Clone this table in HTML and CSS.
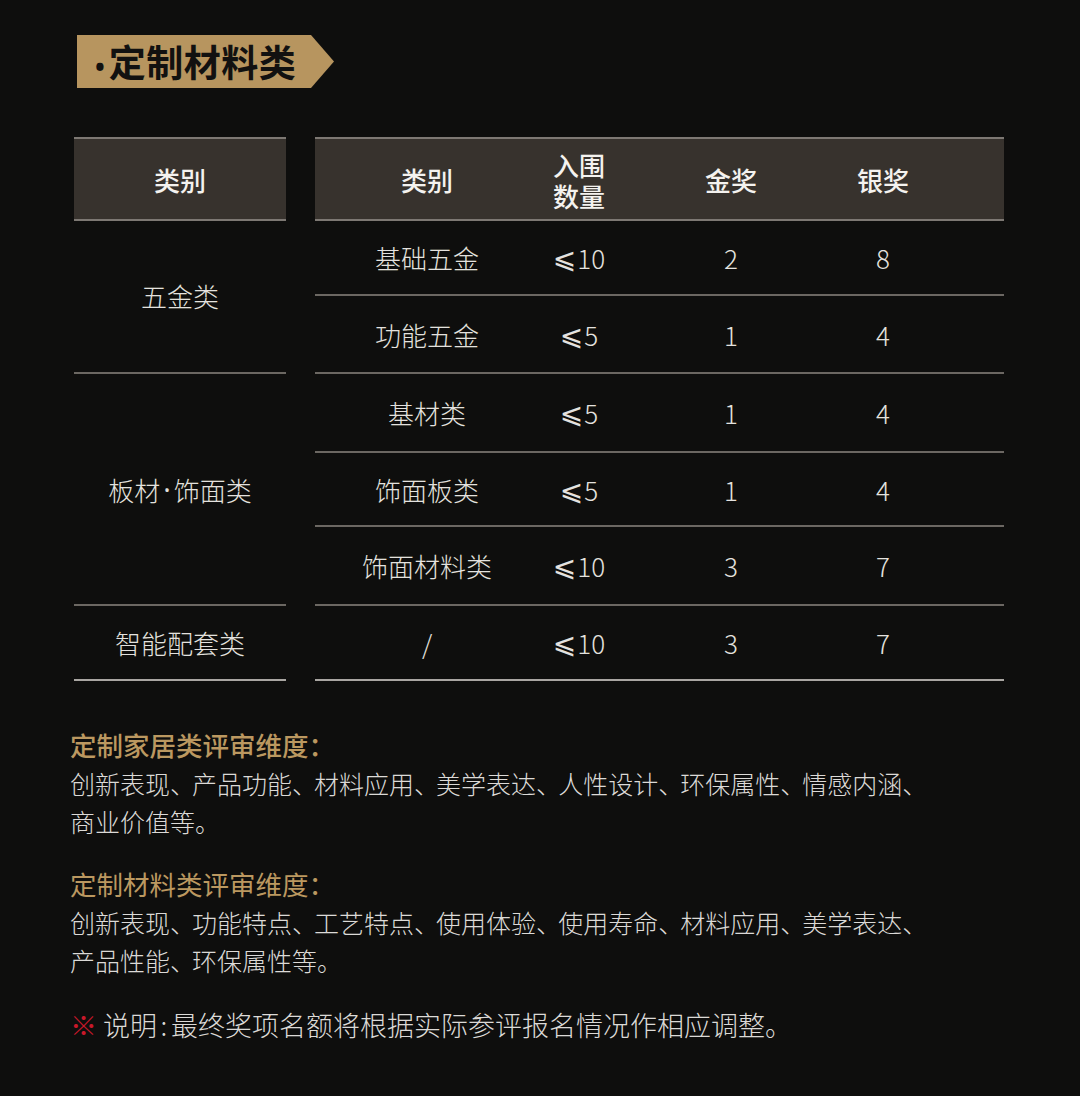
FILE: index.html
```html
<!DOCTYPE html>
<html lang="zh-CN">
<head>
<meta charset="utf-8">
<title>定制材料类</title>
<link rel="stylesheet" href="styles.css">
</head>
<body>
<div class="page">
  <div class="banner"><span class="dot">•</span>定制材料类</div>

  <div class="tables">
    <div class="tcol left">
      <div class="cell head">类别</div>
      <div class="cell h153">五金类</div>
      <div class="cell h232">板材<span class="mid">•</span>饰面类</div>
      <div class="cell h75">智能配套类</div>
    </div>
    <div class="tcol right">
      <div class="row head">
        <div class="c">类别</div>
        <div class="c two"><span class="ln">入围</span><span class="ln">数量</span></div>
        <div class="c">金奖</div>
        <div class="c">银奖</div>
      </div>
      <div class="row r75">
        <div class="c">基础五金</div><div class="c num"><span class="le">⩽</span>10</div><div class="c num">2</div><div class="c num">8</div>
      </div>
      <div class="row r78">
        <div class="c">功能五金</div><div class="c num"><span class="le">⩽</span>5</div><div class="c num">1</div><div class="c num">4</div>
      </div>
      <div class="row r79">
        <div class="c">基材类</div><div class="c num"><span class="le">⩽</span>5</div><div class="c num">1</div><div class="c num">4</div>
      </div>
      <div class="row r74">
        <div class="c">饰面板类</div><div class="c num"><span class="le">⩽</span>5</div><div class="c num">1</div><div class="c num">4</div>
      </div>
      <div class="row r79">
        <div class="c">饰面材料类</div><div class="c num"><span class="le">⩽</span>10</div><div class="c num">3</div><div class="c num">7</div>
      </div>
      <div class="row r75 last">
        <div class="c">/</div><div class="c num"><span class="le">⩽</span>10</div><div class="c num">3</div><div class="c num">7</div>
      </div>
    </div>
  </div>

  <div class="notes">
    <div class="block">
      <div class="sub strong">定制家居类评审维度：</div>
      <p>创新表现<span class="dun">、</span>产品功能<span class="dun">、</span>材料应用<span class="dun">、</span>美学表达<span class="dun">、</span>人性设计<span class="dun">、</span>环保属性<span class="dun">、</span>情感内涵<span class="dun">、</span><br>商业价值等。</p>
    </div>
    <div class="block">
      <div class="sub">定制材料类评审维度：</div>
      <p>创新表现<span class="dun">、</span>功能特点<span class="dun">、</span>工艺特点<span class="dun">、</span>使用体验<span class="dun">、</span>使用寿命<span class="dun">、</span>材料应用<span class="dun">、</span>美学表达<span class="dun">、</span><br>产品性能<span class="dun">、</span>环保属性等。</p>
    </div>
    <p class="remark"><span class="mark">※</span> 说明<span class="colon">:</span>最终奖项名额将根据实际参评报名情况作相应调整。</p>
  </div>
</div>
</body>
</html>
```

FILE: styles.css
```css
* { box-sizing: border-box; }
html, body {
  margin: 0;
  padding: 0;
  background: #0e0e0d;
}
body {
  font-family: "Noto Sans CJK SC", "Noto Sans", sans-serif;
  color: #e4e2df;
  width: 1080px;
  height: 1096px;
  overflow: hidden;
}
.page {
  padding: 35px 0 0 74px;
}
.banner {
  margin-left: 3px;
  width: 257px;
  height: 53px;
  background: #b7955f;
  clip-path: polygon(0 0, 234px 0, 257px 50%, 234px 100%, 0 100%);
  color: #121110;
  font-weight: 700;
  font-size: 37px;
  line-height: 53px;
  padding-left: 18px;
  letter-spacing: 0.5px;
  white-space: nowrap;
}
.banner .dot {
  font-family: "Noto Sans", sans-serif;
  font-size: 26px;
  letter-spacing: 0;
  margin-right: 4px;
}
.tables {
  display: flex;
  gap: 29px;
  margin-top: 49px;
  font-size: 26px;
}
.tcol.left { width: 212px; }
.tcol.right { width: 689px; }
.head {
  height: 84px;
  background: #37322d;
  border-top: 2px solid #7d7873;
  border-bottom: 2px solid #7d7873;
  color: #f4f2ef;
  font-weight: 500;
}
.cell {
  display: flex;
  align-items: center;
  justify-content: center;
  border-bottom: 2px solid #6b6762;
  font-weight: 300;
}
.cell.head { font-weight: 500; border-bottom-color: #7d7873; }
.h153 { height: 153px; padding-bottom: 2px; }
.h232 { height: 232px; }
.h75 { height: 75px; border-bottom-color: #a9a6a2; }
.mid {
  font-family: "Noto Sans", sans-serif;
  font-size: 20px;
  margin: 0 3px;
}
.row {
  display: grid;
  grid-template-columns: repeat(4, 152px);
  padding-left: 36px;
  align-items: center;
  border-bottom: 2px solid #6b6762;
  font-weight: 300;
}
.row.head { font-weight: 500; border-bottom-color: #7d7873; }
.row .c { text-align: center; }
.row .two {
  display: flex;
  flex-direction: column;
  align-items: center;
  gap: 5px;
  padding-top: 2px;
}
.row .two .ln { line-height: 26px; }
.le {
  font-family: "DejaVu Sans", sans-serif;
  font-size: 28px;
  font-weight: 400;
  line-height: 1;
  margin-right: 1px;
  vertical-align: 1px;
}
.r75 { height: 75px; }
.r78 { height: 78px; }
.r79 { height: 79px; }
.r74 { height: 74px; }
.row.last { border-bottom-color: #a9a6a2; }
.notes {
  margin-top: 45px;
  margin-left: -4px;
  font-size: 25px;
  line-height: 38px;
}
.block { margin-bottom: 25px; }
.sub {
  color: #bb9860;
  font-size: 26.5px;
  font-weight: 400;
}
.sub.strong { font-weight: 500; }
.notes p {
  margin: 0;
  font-weight: 300;
  color: #dcdad7;
}
.dun { letter-spacing: -3px; }
.notes p.remark {
  margin-top: 27px;
  font-size: 27px;
}
.colon { display: inline-block; width: 14px; text-align: center; }
.mark { color: #c8182a; }
```
